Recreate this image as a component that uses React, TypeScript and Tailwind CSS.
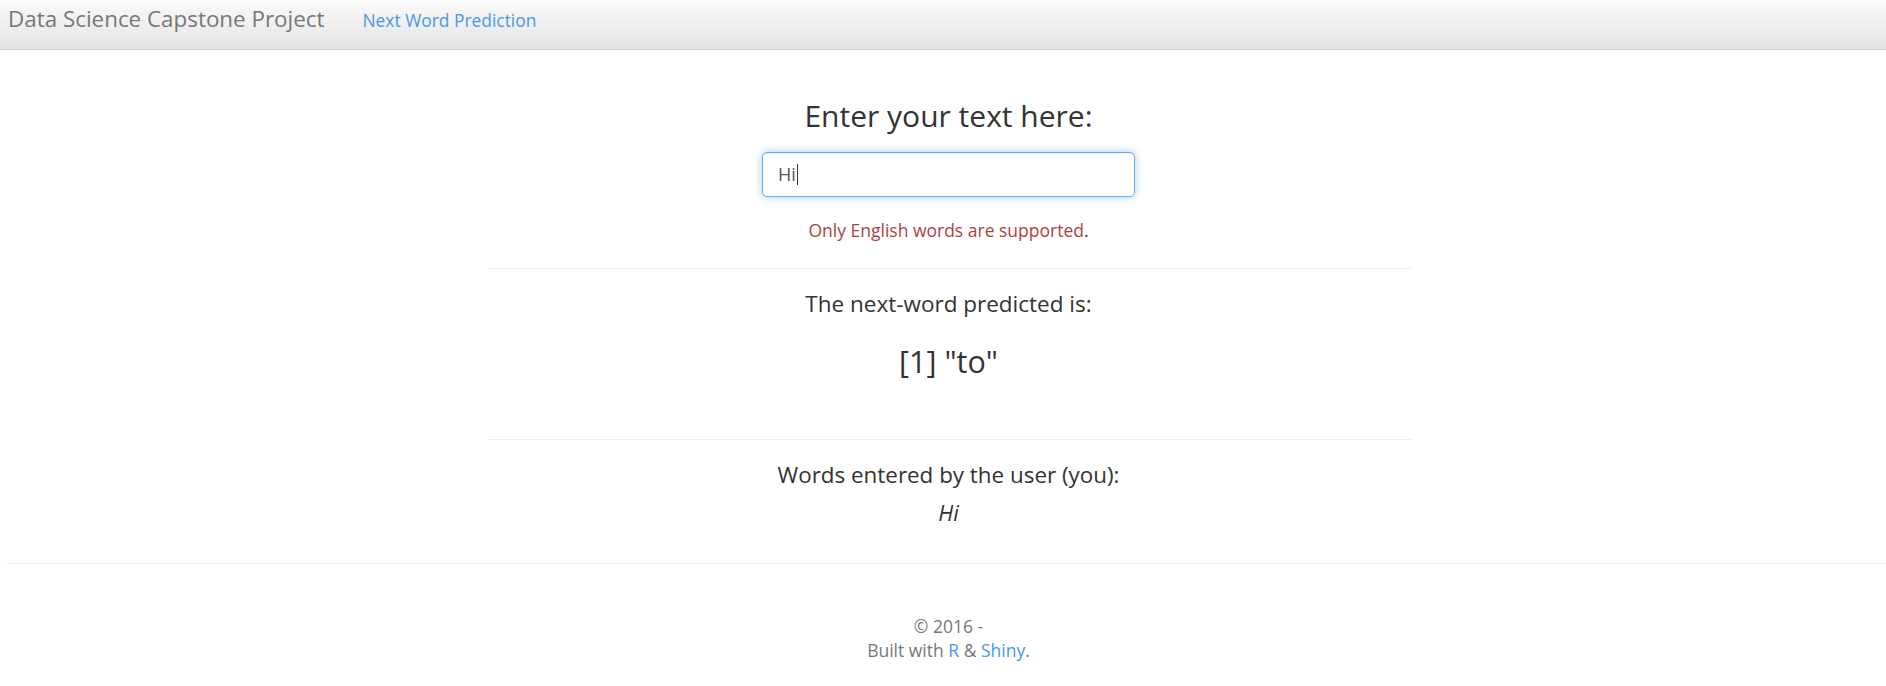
export default function App() {
  return (
    <div className="min-h-screen bg-white font-['Open_Sans',sans-serif] text-[#333]">
      {/* top bar */}
      <nav className="flex h-[50px] items-center border-b border-[#d3d3d3] bg-gradient-to-b from-[#fafafa] to-[#e5e5e5] px-[8px] pb-[10px]">
        <span className="text-[22.4px] leading-none text-[#777]">Data Science Capstone Project</span>
        <a className="ml-[38px] mt-[2px] text-[17.4px] leading-none text-[#4a97e8]">Next Word Prediction</a>
      </nav>

      <div className="pl-[11px]">
        <div className="mx-auto flex w-[924px] flex-col items-center">
          <h3 className="mt-[50px] text-[30px] leading-[32px]">Enter your text here:</h3>
          <div className="mt-[20px] flex h-[45px] w-[373px] items-center rounded-[5px] border border-[#66afe9] bg-white px-[15px] shadow-[inset_0_1px_1px_rgba(0,0,0,0.075),0_0_8px_rgba(102,175,233,0.6)]">
            <span className="text-[18px] text-[#555]">Hi</span>
            <span className="ml-[1px] h-[21px] w-px bg-[#333]" />
          </div>
          <p className="mt-[22px] text-[17.5px] leading-[22px]">
            <span className="text-[#a94442]">Only English words are supported</span>.
          </p>

          <hr className="mt-[27px] w-full border-t border-[#eee]" />

          <p className="mt-[21px] text-[22.5px] leading-[28px]">The next-word predicted is:</p>
          <p className="mt-[26px] text-[30.5px] leading-[34px]">[1] "to"</p>

          <hr className="mt-[61px] w-full border-t border-[#eee]" />

          <p className="mt-[21px] text-[22.4px] leading-[28px]">Words entered by the user (you):</p>
          <p className="mt-[9px] text-[22px] italic leading-[28px]">Hi</p>
        </div>
      </div>

      <hr className="ml-[6px] mt-[37px] border-t border-[#eee]" />

      <footer className="mt-[50px] flex flex-col items-center pl-[11px] text-[17.5px] leading-[24px] text-[#777]">
        <span>© 2016 -</span>
        <span>
          Built with <a className="text-[#4a97e8]">R</a> &amp; <a className="text-[#4a97e8]">Shiny</a>.
        </span>
      </footer>
    </div>
  );
}
